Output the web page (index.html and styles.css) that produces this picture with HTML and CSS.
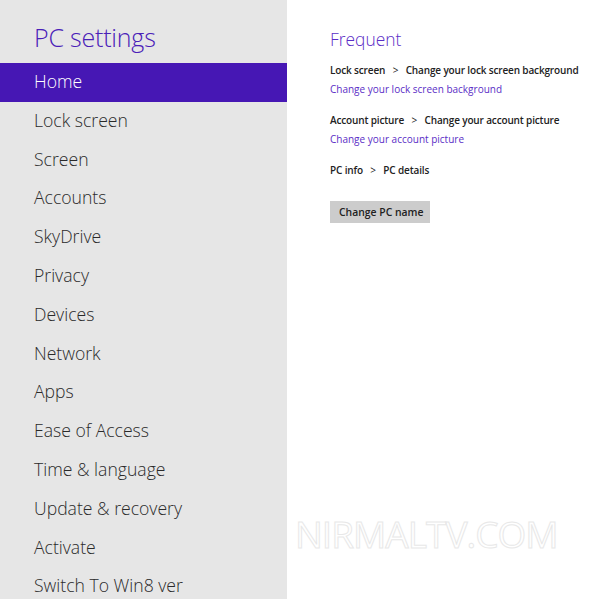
FILE: index.html
```html
<!DOCTYPE html>
<html lang="en">
<head>
    <meta charset="UTF-8">
    <title>PC settings</title>
    <link rel="stylesheet" href="styles.css">
</head>
<body>
    <div class="sidebar">
        <h1 class="title">PC settings</h1>
        <ul class="nav">
            <li class="active">Home</li>
            <li>Lock screen</li>
            <li>Screen</li>
            <li>Accounts</li>
            <li>SkyDrive</li>
            <li>Privacy</li>
            <li>Devices</li>
            <li>Network</li>
            <li>Apps</li>
            <li>Ease of Access</li>
            <li>Time &amp; language</li>
            <li>Update &amp; recovery</li>
            <li>Activate</li>
            <li>Switch To Win8 ver</li>
        </ul>
    </div>
    <div class="content">
        <h2 class="heading">Frequent</h2>
        <div class="group">
            <div class="crumb">Lock screen <span class="sep">&gt;</span> Change your lock screen background</div>
            <a class="link">Change your lock screen background</a>
        </div>
        <div class="group">
            <div class="crumb">Account picture <span class="sep">&gt;</span> Change your account picture</div>
            <a class="link">Change your account picture</a>
        </div>
        <div class="group">
            <div class="crumb">PC info <span class="sep">&gt;</span> PC details</div>
        </div>
        <button class="btn">Change PC name</button>
        <div class="watermark">NIRMALTV.COM</div>
    </div>
</body>
</html>
```
FILE: styles.css
```css
body {
    margin: 0;
    display: flex;
    height: 599px;
    overflow: hidden;
    font-family: "Open Sans", "Noto Sans", sans-serif;
    background: #fff;
}
.sidebar {
    width: 287px;
    flex-shrink: 0;
    background: #e6e6e6;
}
.title {
    margin: 0;
    padding: 20px 0 0 34px;
    height: 43px;
    font-size: 25px;
    font-weight: 300;
    color: #4a20b8;
    letter-spacing: -0.2px;
}
.nav {
    list-style: none;
    margin: 0;
    padding: 0;
}
.nav li {
    height: 38.8px;
    line-height: 37px;
    padding-left: 34px;
    font-size: 17.6px;
    font-weight: 300;
    color: #2a2a2a;
    white-space: nowrap;
}
.nav li.active {
    background: #4617b4;
    color: #fff;
}
.content {
    flex: 1;
    padding: 27px 0 0 43px;
    position: relative;
}
.heading {
    margin: 0 0 10px;
    font-size: 17.4px;
    font-weight: 300;
    color: #5a2dc6;
}
.group {
    margin-bottom: 12px;
}
.crumb {
    font-size: 10px;
    font-weight: 600;
    color: #222;
    line-height: 18px;
    letter-spacing: -0.15px;
    white-space: nowrap;
}
.sep {
    margin: 0 5px;
    font-weight: 400;
}
.link {
    display: block;
    font-size: 10px;
    color: #5a2dc6;
    line-height: 20px;
    white-space: nowrap;
}
.btn {
    margin-top: 10px;
    padding: 0 9px;
    height: 22px;
    width: 100px;
    border: none;
    background: #cccccc;
    font-family: inherit;
    font-size: 10.4px;
    font-weight: 600;
    color: #222;
    white-space: nowrap;
}
.watermark {
    position: absolute;
    left: 8px;
    top: 508px;
    font-size: 37px;
    font-weight: 400;
    color: #fff;
    letter-spacing: -1px;
    -webkit-text-stroke: 1px #e8e8e8;
}
```
